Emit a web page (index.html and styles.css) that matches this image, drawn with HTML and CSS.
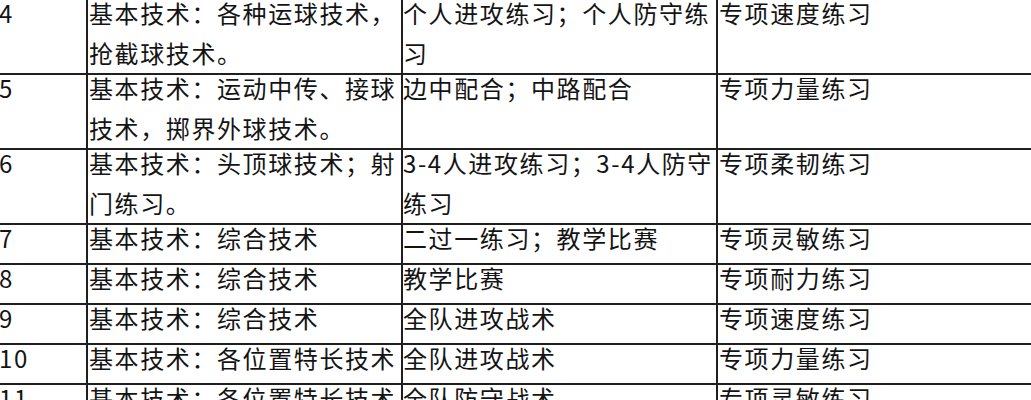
FILE: index.html
```html
<!DOCTYPE html>
<html lang="zh-CN">
<head>
<meta charset="utf-8">
<title>训练计划</title>
<link rel="stylesheet" href="styles.css">
</head>
<body>
<div class="sheet">
  <div class="cell num"><div class="txt">4</div></div>
  <div class="cell"><div class="txt">基本技术：各种运球技术，抢截球技术。</div></div>
  <div class="cell c3"><div class="txt">个人进攻练习；个人防守练习</div></div>
  <div class="cell c4"><div class="txt">专项速度练习</div></div>

  <div class="cell num"><div class="txt">5</div></div>
  <div class="cell"><div class="txt">基本技术：运动中传、接球技术，掷界外球技术。</div></div>
  <div class="cell c3"><div class="txt">边中配合；中路配合</div></div>
  <div class="cell c4"><div class="txt">专项力量练习</div></div>

  <div class="cell num"><div class="txt">6</div></div>
  <div class="cell"><div class="txt">基本技术：头顶球技术；射门练习。</div></div>
  <div class="cell c3"><div class="txt">3-4人进攻练习；3-4人防守练习</div></div>
  <div class="cell c4"><div class="txt">专项柔韧练习</div></div>

  <div class="cell num"><div class="txt">7</div></div>
  <div class="cell"><div class="txt">基本技术：综合技术</div></div>
  <div class="cell c3"><div class="txt">二过一练习；教学比赛</div></div>
  <div class="cell c4"><div class="txt">专项灵敏练习</div></div>

  <div class="cell num"><div class="txt">8</div></div>
  <div class="cell"><div class="txt">基本技术：综合技术</div></div>
  <div class="cell c3"><div class="txt">教学比赛</div></div>
  <div class="cell c4"><div class="txt">专项耐力练习</div></div>

  <div class="cell num"><div class="txt">9</div></div>
  <div class="cell"><div class="txt">基本技术：综合技术</div></div>
  <div class="cell c3"><div class="txt">全队进攻战术</div></div>
  <div class="cell c4"><div class="txt">专项速度练习</div></div>

  <div class="cell num"><div class="txt">10</div></div>
  <div class="cell"><div class="txt">基本技术：各位置特长技术</div></div>
  <div class="cell c3"><div class="txt">全队进攻战术</div></div>
  <div class="cell c4"><div class="txt">专项力量练习</div></div>

  <div class="cell num"><div class="txt">11</div></div>
  <div class="cell"><div class="txt">基本技术：各位置特长技术</div></div>
  <div class="cell c3"><div class="txt">全队防守战术</div></div>
  <div class="cell c4"><div class="txt">专项灵敏练习</div></div>
</div>
</body>
</html>
```
FILE: styles.css
```css
html, body {
  margin: 0;
  padding: 0;
  overflow: hidden;
  background: #ffffff;
}

.sheet {
  display: grid;
  grid-template-columns: 88px 313px 313px 330px;
  gap: 2px;
  background: #1f1f1f;
  margin-left: -2px;
  width: 1050px;
  font-family: "Noto Sans CJK SC", "Noto Sans", sans-serif;
  font-size: 24px;
  letter-spacing: 1.6px;
  color: #141414;
}

.cell {
  background: #ffffff;
  min-height: 38px;
  padding: 0 0 0 1px;
}

.cell.c3 {
  padding-left: 0;
}

.cell.c4 {
  padding-left: 1px;
}

.txt {
  line-height: 40px;
  margin-top: -7px;
}
```
